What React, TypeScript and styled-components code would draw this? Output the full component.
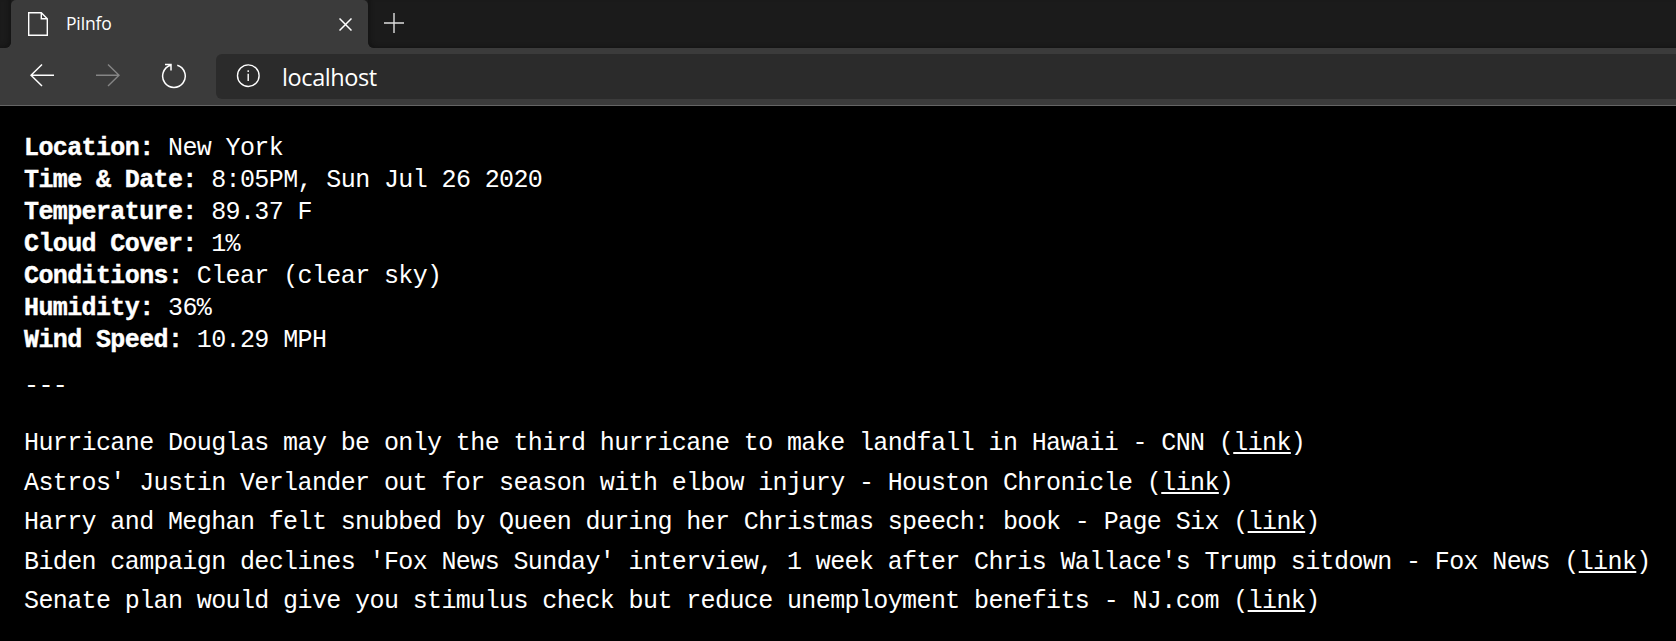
import React from "react";
import styled, { createGlobalStyle } from "styled-components";

const GlobalStyle = createGlobalStyle`
  * { box-sizing: border-box; }
  html, body { margin: 0; background: #000; }
  body { overflow: hidden; }
`;

const Window = styled.div`
  width: 100%;
  height: 641px;
  display: flex;
  flex-direction: column;
  overflow: hidden;
  background: #000;
  color: #fff;
  font-family: "Open Sans", "Noto Sans", sans-serif;
`;

const TabStrip = styled.div`
  display: flex;
  height: 48px;
  flex: none;
  background: #3b3b3b;
`;

const StripEdge = styled.div`
  width: 11px;
  background: #1b1b1b;
  border-bottom-right-radius: 6px;
  box-shadow: inset -3px -2px 4px -1px #141414;
`;

const StripRest = styled.div`
  flex: 1;
  display: flex;
  padding: 13px 0 0 16px;
  background: #1b1b1b;
  border-bottom-left-radius: 6px;
  box-shadow: inset 3px -2px 4px -1px #141414;
`;

const TabBack = styled.div`
  width: 357px;
  background: #1b1b1b;
`;

const Tab = styled.div`
  display: flex;
  height: 48px;
  padding: 0 16px 0 17px;
  background: #3b3b3b;
  border-radius: 5px 5px 0 0;
`;

const PageIcon = styled.svg`
  margin-top: 12px;
  flex: none;
`;

const TabTitle = styled.div`
  flex: 1;
  margin-left: 18px;
  font-size: 17.5px;
  line-height: 24px;
  padding-top: 11px;
  letter-spacing: -0.25px;
`;

const CloseIcon = styled.svg`
  margin-top: 18px;
  flex: none;
`;

const Toolbar = styled.div`
  display: flex;
  flex: none;
  height: 58px;
  padding: 6px 0 0 30px;
  background: #3b3b3b;
  border-bottom: 1px solid #656565;
`;

const NavButton = styled.div<{ $gap: number }>`
  width: 25px;
  height: 45px;
  padding-top: 9px;
  margin-right: ${(p) => p.$gap}px;
  svg { display: block; }
`;

const AddressBar = styled.div`
  flex: 1;
  display: flex;
  height: 45px;
  padding-left: 20px;
  border-radius: 6px 0 0 6px;
  background: #2b2b2b;
`;

const InfoIcon = styled.svg`
  margin-top: 9px;
  flex: none;
`;

const Address = styled.div`
  margin-left: 21px;
  padding-top: 7px;
  font-size: 23.5px;
  line-height: 32px;
  letter-spacing: -0.4px;
`;

const Page = styled.main`
  flex: 1;
  padding: 27px 0 0 24px;
  font-family: "Liberation Mono", monospace;
  font-size: 25px;
  letter-spacing: -0.607px;
  line-height: 32px;
  white-space: nowrap;
`;

const Fact = styled.div`
  height: 32px;
`;

const Label = styled.b`
  font-weight: 700;
  -webkit-text-stroke: 0.4px #fff;
`;

const Divider = styled.div`
  margin: 14px 0 21px;
`;

const Headline = styled.div`
  line-height: 39.5px;
`;

const StoryLink = styled.a`
  color: inherit;
  text-decoration: underline;
  text-decoration-thickness: 2px;
  text-underline-offset: 2px;
  text-decoration-skip-ink: none;
`;

const facts = [
  ["Location", "New York"],
  ["Time & Date", "8:05PM, Sun Jul 26 2020"],
  ["Temperature", "89.37 F"],
  ["Cloud Cover", "1%"],
  ["Conditions", "Clear (clear sky)"],
  ["Humidity", "36%"],
  ["Wind Speed", "10.29 MPH"],
];

const headlines = [
  "Hurricane Douglas may be only the third hurricane to make landfall in Hawaii - CNN",
  "Astros' Justin Verlander out for season with elbow injury - Houston Chronicle",
  "Harry and Meghan felt snubbed by Queen during her Christmas speech: book - Page Six",
  "Biden campaign declines 'Fox News Sunday' interview, 1 week after Chris Wallace's Trump sitdown - Fox News",
  "Senate plan would give you stimulus check but reduce unemployment benefits - NJ.com",
];

export default function App() {
  return (
    <Window>
      <GlobalStyle />
      <TabStrip>
        <StripEdge />
        <TabBack>
          <Tab>
            <PageIcon width="20" height="24" fill="none" stroke="#fff" strokeWidth="1.4">
              <path d="M.7.7H13.3L19.3 6.7V23.3H.7ZM13.3.7V6.7H19.3" />
            </PageIcon>
            <TabTitle>PiInfo</TabTitle>
            <CloseIcon width="13" height="13" stroke="#fff" strokeWidth="1.5">
              <path d="M.5.5 12.5 12.5M12.5.5.5 12.5" />
            </CloseIcon>
          </Tab>
        </TabBack>
        <StripRest>
          <svg width="21" height="21" stroke="#dedede" strokeWidth="1.4">
            <path d="M10 0V20M0 10H20" />
          </svg>
        </StripRest>
      </TabStrip>
      <Toolbar>
        <NavButton $gap={41}>
          <svg width="25" height="25" fill="none" stroke="#fff" strokeWidth="1.5">
            <path d="M24 12.3H1M12 1.5 1 12.3 12 23" />
          </svg>
        </NavButton>
        <NavButton $gap={40}>
          <svg width="25" height="25" fill="none" stroke="#858585" strokeWidth="1.4">
            <path d="M0 12.3H23M12 1.5 23 12.3 12 23" />
          </svg>
        </NavButton>
        <NavButton $gap={30}>
          <svg width="26" height="26" fill="none" stroke="#fff" strokeWidth="1.5">
            <path d="M16.3 2.3A11.3 11.3 0 1 1 9.6 2.3M4 1.6H10V7.5" />
          </svg>
        </NavButton>
        <AddressBar>
          <InfoIcon width="25" height="25" fill="none" stroke="#fff" strokeWidth="1.4">
            <circle cx="12.3" cy="12.7" r="10.8" />
            <path d="M12.2 10.8V18M12.2 7.3V9" />
          </InfoIcon>
          <Address>localhost</Address>
        </AddressBar>
      </Toolbar>
      <Page>
        {facts.map(([label, value]) => (
          <Fact key={label}>
            <Label>{label}:</Label> {value}
          </Fact>
        ))}
        <Divider>---</Divider>
        {headlines.map((text) => (
          <Headline key={text}>
            {text} (<StoryLink>link</StoryLink>)
          </Headline>
        ))}
      </Page>
    </Window>
  );
}
